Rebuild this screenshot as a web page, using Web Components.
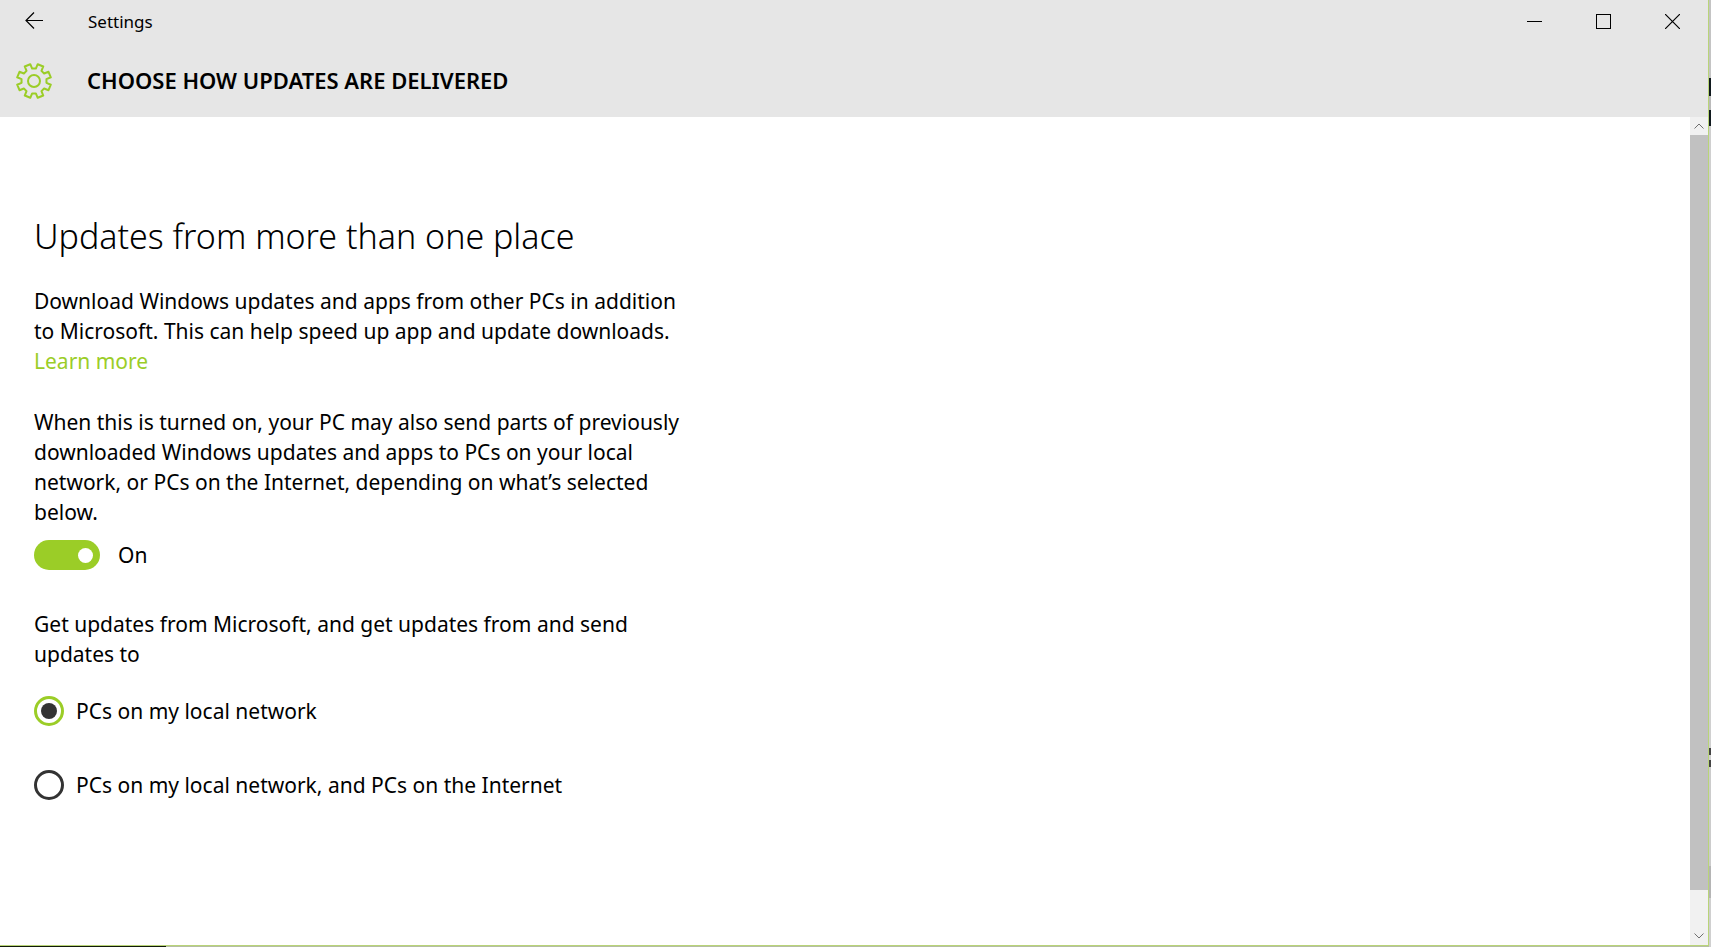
<!DOCTYPE html>
<html lang="en">
<head>
<meta charset="utf-8">
<title>Settings</title>
<style>
  html, body { margin: 0; }
  body {
    --accent: #9bcd27;
    --edge: #b9d478;
    font-family: "Noto Sans", "Open Sans", sans-serif;
    color: #000;
    background: #c4c4c4;
  }
</style>
</head>
<body>
<app-window>
  <title-bar slot="top" app="Settings" heading="Choose how updates are delivered"></title-bar>
  <settings-page heading="Updates from more than one place">
    <text-block>Download Windows updates and apps from other PCs in addition to Microsoft. This can help speed up app and update downloads. <text-link href="#learn-more">Learn more</text-link></text-block>
    <text-block>When this is turned on, your PC may also send parts of previously downloaded Windows updates and apps to PCs on your local network, or PCs on the Internet, depending on what’s selected below.</text-block>
    <toggle-switch></toggle-switch>
    <radio-group label="Get updates from Microsoft, and get updates from and send updates to"></radio-group>
  </settings-page>
  <scroll-bar slot="side"></scroll-bar>
</app-window>

<script>
class Base extends HTMLElement {
  connectedCallback() {
    if (this.shadowRoot) return;
    this.attachShadow({ mode: 'open' }).innerHTML = this.view();
    this.ready();
  }
  ready() {}
}

// Window frame: thin accent edge, with a sliver of the desktop to the right and below
customElements.define('app-window', class extends Base {
  view() {
    return `<style>
      :host { display: block; box-sizing: border-box; min-height: 100vh; padding: 0 2px 1px 0; display: grid;
        background:
          linear-gradient(90deg, #11190a 166px, transparent 0) bottom / 100% 1px no-repeat,
          linear-gradient(#c4c4c4 78px, #10191e 0 96px, #bbb 0 110px, #10191e 0 126px, #d0d0d0 0 748px,
            #444 0 755px, #d0d0d0 0 760px, #444 0 767px, #ccc 0 866px, #b5b5b5 0 898px, #d0d0d0 0) right / 2px 100% no-repeat,
          #b5bda5; }
      .frame { display: grid; grid-template-rows: auto 1fr; background: #fff;
        border: solid var(--edge); border-width: 0 1px 1px 0; }
      .body { display: grid; grid-template-columns: 1fr 18px; }
    </style>
    <div class="frame"><slot name="top"></slot><div class="body"><slot></slot><slot name="side"></slot></div></div>`;
  }
});

customElements.define('gear-icon', class extends Base {
  view() {
    const pts = [];
    for (let i = 0; i < 8; i++) {
      const mid = i * 45 + 22.5;
      for (const [d, r] of [[-14, 12.6], [-10, 17.2], [10, 17.2], [14, 12.6]]) {
        const a = (mid + d) * Math.PI / 180;
        pts.push((19 + r * Math.sin(a)).toFixed(2) + ',' + (20 - r * Math.cos(a)).toFixed(2));
      }
    }
    return `<style>:host { display: block; } svg { display: block; }</style>
    <svg width="38" height="38" viewBox="0 0 38 38" fill="none" stroke="#9bcd27" stroke-width="2" stroke-linejoin="round" aria-hidden="true">
      <polygon points="${pts.join(' ')}"/><circle cx="19" cy="20" r="6"/></svg>`;
  }
});

customElements.define('title-bar', class extends Base {
  view() {
    return `<style>
      :host { display: block; background: #e6e6e6; }
      .bar { display: flex; height: 43px; padding-right: 1px; }
      button { border: 0; padding: 0; background: none; color: #000; display: grid; place-items: center; }
      .back { width: 68px; height: 42px; margin-right: 20px; }
      .app { flex: 1; font-size: 17px; line-height: 43px; }
      .caption { width: 69px; }
      .head { display: flex; align-items: center; height: 74px; }
      gear-icon { margin: 0 34px 0 15px; }
      h1 { margin: 0; font-size: 22px; line-height: 30px; font-weight: 600; text-transform: uppercase; }
      svg { display: block; fill: none; stroke: currentColor; }
    </style>
    <div class="bar">
      <button class="back" aria-label="Back"><svg width="18" height="18" viewBox="0 0 18 18"><path d="M18 8.5H1M9 .5L1 8.5L9 16.5" stroke-width="1.2"/></svg></button>
      <span class="app">${this.getAttribute('app')}</span>
      <button class="caption" aria-label="Minimize"><svg width="15" height="15"><path d="M0 7.5H15"/></svg></button>
      <button class="caption" aria-label="Maximize"><svg width="15" height="15"><rect x=".5" y=".5" width="14" height="14"/></svg></button>
      <button class="caption" aria-label="Close"><svg width="15" height="15"><path d="M0 0L15 15M15 0L0 15" stroke-width="1.2"/></svg></button>
    </div>
    <div class="head"><gear-icon></gear-icon><h1>${this.getAttribute('heading')}</h1></div>`;
  }
});

customElements.define('settings-page', class extends Base {
  view() {
    return `<style>
      :host { display: block; padding: 95px 34px 40px; }
      .col { max-width: 660px; }
      h2 { margin: 0 0 26px; font-size: 34px; line-height: 48px; font-weight: 300; }
    </style>
    <div class="col"><h2>${this.getAttribute('heading')}</h2><slot></slot></div>`;
  }
});

customElements.define('text-block', class extends Base {
  view() {
    return `<style>:host { display: block; } p { margin: 0 0 31px; font-size: 21px; line-height: 30px; }
      :host(:nth-of-type(2)) p { margin-bottom: 13px; }</style><p><slot></slot></p>`;
  }
});

// The link stands on a line of its own, under the text it belongs to
customElements.define('text-link', class extends Base {
  view() {
    return `<style>:host { display: block; } a { color: var(--accent); text-decoration: none; }</style>
    <a href="${this.getAttribute('href')}"><slot></slot></a>`;
  }
});

customElements.define('toggle-switch', class extends Base {
  view() {
    return `<style>
      :host { display: block; margin-bottom: 39px; }
      label { display: flex; align-items: center; gap: 18px; font-size: 21px; line-height: 30px; }
      input { appearance: none; margin: 0; box-sizing: border-box; width: 66px; height: 30px; padding: 0 7px;
        border-radius: 15px; background: #999; display: flex; align-items: center; }
      input::before { content: ""; width: 15px; height: 15px; border-radius: 50%; background: #fff; }
      input:checked { background: var(--accent); justify-content: flex-end; }
    </style>
    <label><input type="checkbox" role="switch" checked><span>On</span></label>`;
  }
  ready() {
    const input = this.shadowRoot.querySelector('input');
    const text = this.shadowRoot.querySelector('span');
    input.addEventListener('change', () => { text.textContent = input.checked ? 'On' : 'Off'; });
  }
});

customElements.define('radio-group', class extends Base {
  view() {
    return `<style>
      :host { display: block; font-size: 21px; line-height: 30px; }
      fieldset { margin: 0; padding: 0; border: 0; min-width: 0; }
      legend { padding: 0; margin-bottom: 27px; max-width: 640px; }
      label { display: flex; align-items: center; gap: 12px; }
      label + label { margin-top: 44px; }
      input { appearance: none; margin: 0; box-sizing: border-box; width: 30px; height: 30px; flex: none;
        border: 3px solid #333; border-radius: 50%; display: grid; place-items: center; }
      input:checked { border-color: var(--accent); }
      input:checked::before { content: ""; width: 16px; height: 16px; border-radius: 50%; background: #333; }
    </style>
    <fieldset>
      <legend>${this.getAttribute('label')}</legend>
      <label><input type="radio" name="source" checked><span>PCs on my local network</span></label>
      <label><input type="radio" name="source"><span>PCs on my local network, and PCs on the Internet</span></label>
    </fieldset>`;
  }
});

customElements.define('scroll-bar', class extends Base {
  view() {
    return `<style>
      :host { display: flex; flex-direction: column; background: #f1f1f1; }
      button { border: 0; padding: 0; height: 18px; background: none; color: #707070; display: grid; place-items: center; }
      .track { flex: 1; display: flex; flex-direction: column; }
      .thumb { flex: 755; background: #c1c1c1; }
      .rest { flex: 37; }
      svg { fill: none; stroke: currentColor; }
    </style>
    <button aria-label="Scroll up"><svg width="10" height="6"><path d="M.5 5.5L5 1L9.500 5.500"/></svg></button>
    <div class="track"><div class="thumb"></div><div class="rest"></div></div>
    <button aria-label="Scroll down"><svg width="10" height="6"><path d="M.5 .5L5 5L9.500 .5"/></svg></button>`;
  }
});
</script>
</body>
</html>
